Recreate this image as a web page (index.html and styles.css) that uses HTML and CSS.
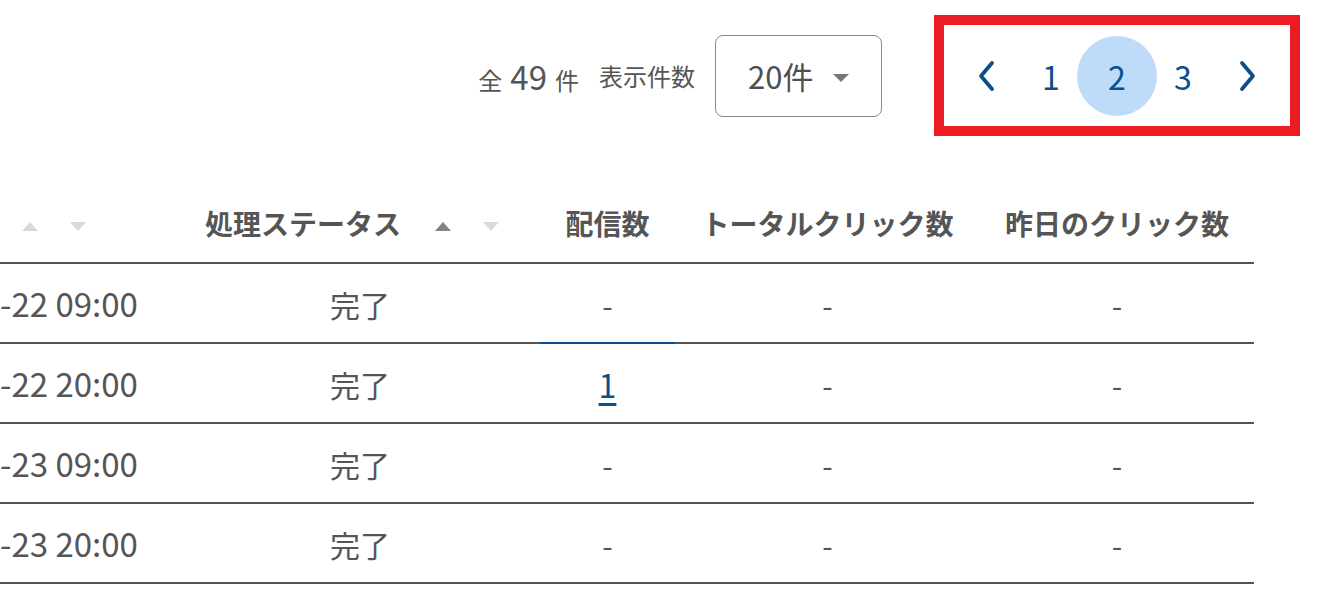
FILE: index.html
```html
<!DOCTYPE html>
<html lang="ja">
<head>
<meta charset="utf-8">
<link rel="stylesheet" href="styles.css">
</head>
<body>
<div class="toolbar">
  <div class="total"><span class="unit">全</span><span class="num">49</span><span class="unit">件</span></div>
  <div class="per-label">表示件数</div>
  <div class="select"><span class="select-value">20件</span><span class="caret"></span></div>
  <nav class="pager">
    <button class="chev prev" aria-label="前へ"><svg width="20" height="32" viewBox="0 0 20 32"><path d="M16 3 L5 16 L16 29" fill="none" stroke="#0b4f8a" stroke-width="3.8" stroke-linecap="round" stroke-linejoin="round"/></svg></button>
    <span class="page">1</span>
    <span class="page current">2</span>
    <span class="page">3</span>
    <button class="chev next" aria-label="次へ"><svg width="20" height="32" viewBox="0 0 20 32"><path d="M4 3 L15 16 L4 29" fill="none" stroke="#0b4f8a" stroke-width="3.8" stroke-linecap="round" stroke-linejoin="round"/></svg></button>
  </nav>
</div>

<table class="grid">
  <colgroup>
    <col class="c-date"><col class="c-status"><col class="c-send"><col class="c-total"><col class="c-yest">
  </colgroup>
  <thead>
    <tr>
      <th class="h-date"><span class="sorts"><span class="tri up"></span><span class="tri down"></span></span></th>
      <th class="h-status"><span class="hlabel">処理ステータス</span><span class="sorts"><span class="tri up active"></span><span class="tri down"></span></span></th>
      <th>配信数</th>
      <th>トータルクリック数</th>
      <th>昨日のクリック数</th>
    </tr>
  </thead>
  <tbody>
    <tr><td class="d">-22 09:00</td><td>完了</td><td class="focus">-</td><td>-</td><td>-</td></tr>
    <tr><td class="d">-22 20:00</td><td>完了</td><td><a class="link" href="#">1</a></td><td>-</td><td>-</td></tr>
    <tr><td class="d">-23 09:00</td><td>完了</td><td>-</td><td>-</td><td>-</td></tr>
    <tr><td class="d">-23 20:00</td><td>完了</td><td>-</td><td>-</td><td>-</td></tr>
  </tbody>
</table>
</body>
</html>
```

FILE: styles.css
```css
html, body {
  margin: 0;
  padding: 0;
  background: #fff;
}
body {
  font-family: "Noto Sans CJK JP", "Noto Sans", sans-serif;
  color: #555;
  width: 1326px;
  overflow: hidden;
}

.toolbar {
  display: flex;
  justify-content: flex-end;
  align-items: center;
  padding: 15px 26px 0 0;
}
.total {
  display: flex;
  align-items: baseline;
  gap: 8px;
}
.total .unit { font-size: 24px; }
.total .num { font-size: 33px; }
.per-label {
  font-size: 24px;
  margin-left: 20px;
}
.select {
  box-sizing: border-box;
  width: 167px;
  height: 82px;
  margin-left: 20px;
  border: 1.5px solid #8a8a8a;
  border-radius: 8px;
  display: flex;
  align-items: center;
  padding-left: 32px;
  gap: 20px;
}
.select-value {
  font-size: 31px;
  color: #4f4f4f;
}
.caret {
  width: 0;
  height: 0;
  border-left: 8px solid transparent;
  border-right: 8px solid transparent;
  border-top: 8px solid #777;
  margin-top: 4px;
}

.pager {
  box-sizing: border-box;
  width: 366px;
  height: 121px;
  margin-left: 52px;
  border: 10px solid #ed1c24;
  display: flex;
  align-items: center;
  justify-content: center;
  gap: 6px;
}
.chev {
  width: 40px;
  height: 40px;
  padding: 0;
  border: 0;
  background: none;
  display: flex;
  align-items: center;
  justify-content: center;
}
.chev.prev { margin-right: 19px; }
.chev.next { margin-left: 19px; }
.page {
  width: 40px;
  height: 80px;
  display: flex;
  align-items: center;
  justify-content: center;
  font-size: 32px;
  color: #0b4f8a;
}
.page.current {
  width: 80px;
  border-radius: 50%;
  background: #bfdbfa;
}

.grid {
  border-collapse: collapse;
  table-layout: fixed;
  width: 1254px;
  margin-top: 47px;
}
.c-date { width: 180px; }
.c-status { width: 360px; }
.c-send { width: 135px; }
.c-total { width: 305px; }
.c-yest { width: 274px; }

.grid th {
  height: 79px;
  padding: 0;
  font-size: 28px;
  font-weight: 700;
  color: #555;
  text-align: center;
  border-bottom: 2px solid #555;
  vertical-align: middle;
}
.grid th.h-date { text-align: left; }
.h-date .sorts { padding-left: 22px; }
.h-status .hlabel { margin-left: -16px; }
.h-status .sorts { margin-left: 34px; }
.sorts {
  display: inline-flex;
  gap: 32px;
  align-items: center;
  vertical-align: middle;
}
.tri {
  width: 0;
  height: 0;
  border-left: 8px solid transparent;
  border-right: 8px solid transparent;
}
.tri.up { border-bottom: 9px solid #d9d9d9; }
.tri.down { border-top: 9px solid #d9d9d9; }
.tri.up.active { border-bottom-color: #828282; }

.grid td {
  height: 80px;
  padding: 1px 0 0 0;
  font-size: 30px;
  color: #555;
  text-align: center;
  border-bottom: 2px solid #555;
  vertical-align: middle;
  line-height: 1;
  box-sizing: border-box;
}
.grid td.d {
  text-align: left;
  white-space: nowrap;
  font-size: 33px;
}
.grid td.focus { border-bottom-color: #0b4f8a; }
.link {
  color: #0b4f8a;
  font-size: 32px;
  text-decoration: underline;
  text-underline-offset: 5px;
  text-decoration-thickness: 3px;
}
```
